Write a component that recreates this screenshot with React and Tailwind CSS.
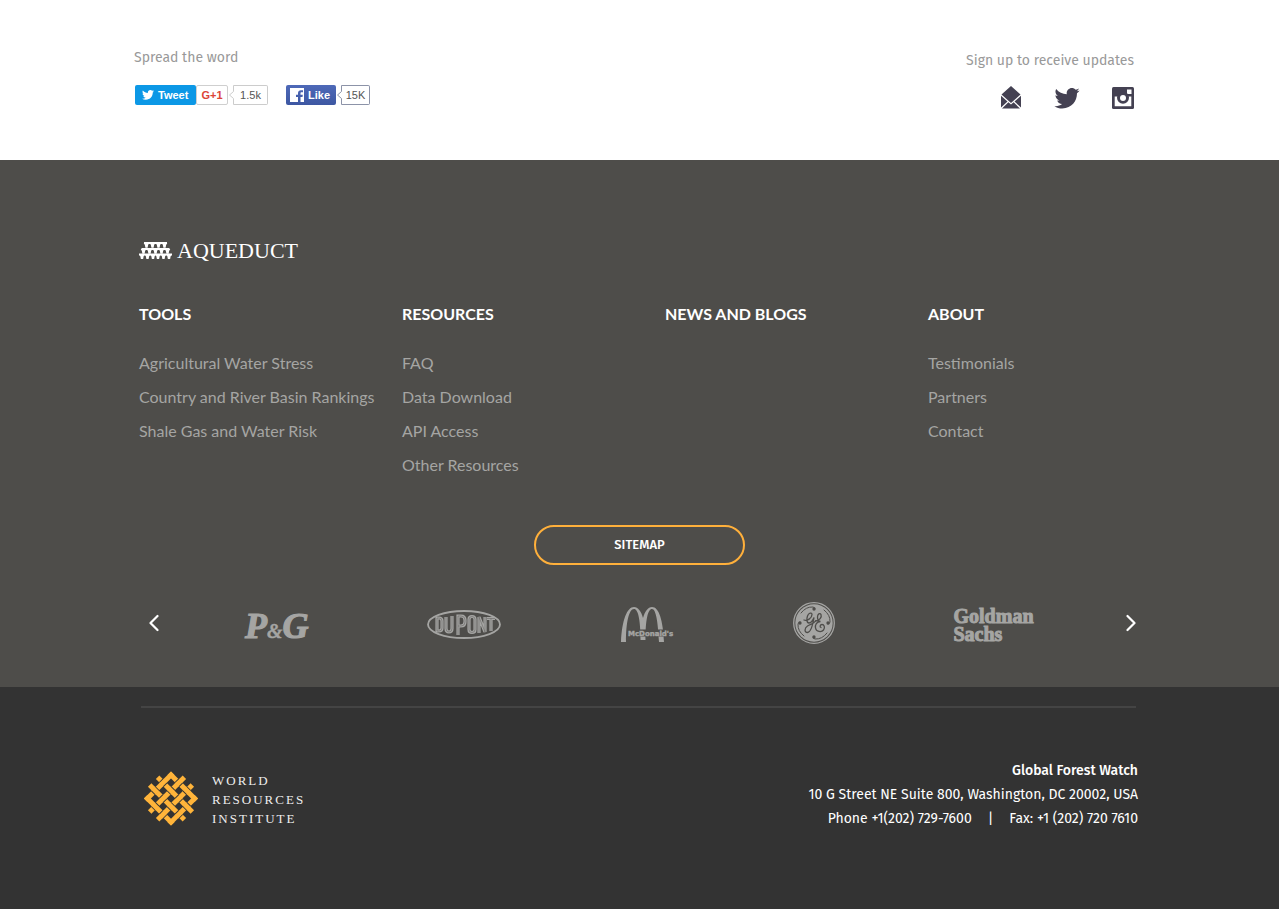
const columns = [
  { title: "TOOLS", links: ["Agricultural Water Stress", "Country and River Basin Rankings", "Shale Gas and Water Risk"] },
  { title: "RESOURCES", links: ["FAQ", "Data Download", "API Access", "Other Resources"] },
  { title: "NEWS AND BLOGS", links: [] },
  { title: "ABOUT", links: ["Testimonials", "Partners", "Contact"] },
];

function Bird({ className }) {
  return (
    <svg viewBox="0 0 24 20" className={className} fill="currentColor" aria-hidden="true">
      <path d="M24 2.4c-.9.4-1.8.7-2.8.8 1-.6 1.800-1.600 2.200-2.700-1 .6-2 1-3.100 1.200C19.400.6 18 0 16.600 0c-2.700 0-4.900 2.200-4.900 4.900 0 .4 0 .8.1 1.100C7.700 5.800 4.100 3.900 1.700.9c-.4.7-.7 1.600-.7 2.500 0 1.700.9 3.200 2.200 4.100-.8 0-1.600-.2-2.200-.6v.1c0 2.400 1.700 4.400 3.900 4.800-.4.1-.8.2-1.300.2-.3 0-.6 0-.9-.1.6 2 2.400 3.400 4.600 3.400-1.700 1.300-3.800 2.100-6.100 2.100-.4 0-.8 0-1.200-.1C2.200 18.700 4.800 19.500 7.500 19.500c9.100 0 14-7.500 14-14v-.6c1-.7 1.800-1.600 2.500-2.500z" />
    </svg>
  );
}

function Count({ value, width, stroke }) {
  return (
    <span className={`flex h-5 ${width} items-stretch text-[#555]`}>
      <svg viewBox="0 0 6 20" className="h-5 w-[6px] shrink-0" fill="none" stroke={stroke} aria-hidden="true">
        <path d="M6 .5H5.500V6.500L1.500 10l4 3.500V19.500H6" />
      </svg>
      <span className="flex grow items-center justify-center rounded-r-[2px] border border-l-0" style={{ borderColor: stroke }}>
        {value}
      </span>
    </span>
  );
}

function SocialButtons() {
  return (
    <div className="flex items-center font-['Liberation_Sans',sans-serif] text-[11px] leading-none">
      <button className="flex h-5 w-[61px] items-center gap-1 rounded-[2px] bg-[#0c98e6] pl-[7px] font-bold text-white">
        <Bird className="h-[10px] w-3 shrink-0" />
        Tweet
      </button>
      <button className="h-5 w-8 rounded-[2px] border border-[#cfcfcf] bg-white font-bold text-[#dc4437]">G+1</button>
      <Count value="1.5k" width="w-10" stroke="#cccccc" />
      <button className="ml-[18px] flex h-5 w-[50px] items-center gap-1 rounded-[2px] bg-linear-to-b from-[#4e69b8] to-[#3d57a2] pl-1 font-bold text-white">
        <svg viewBox="0 0 14 14" className="size-[14px] shrink-0" aria-hidden="true">
          <path fill="#fff" d="M0 0h14v14h-3.500V9h2l.3-2.200h-2.300V5.400c0-.7.2-1.100 1.100-1.100H13V2.300h-2C9.100 2.300 8 3.400 8 5.200v1.600H6V9h2v5H0z" />
        </svg>
        Like
      </button>
      <Count value="15K" width="w-[34px]" stroke="#8c93a8" />
    </div>
  );
}

const tiers = [
  { y: 0, x: 5, w: 23, piers: [7.5, 13.500, 19.500, 25.500] },
  { y: 6, x: 2.5, w: 28, piers: [4.5, 10.500, 16.500, 22.500, 28.500] },
  { y: 11.500, x: 0, w: 33, piers: [3, 8.500, 14, 19, 24.500, 30] },
];

function AqueductMark() {
  return (
    <svg viewBox="0 0 33 17" className="h-[17px] w-[33px]" fill="#fff" aria-hidden="true">
      {tiers.map(({ y, x, w, piers }) => (
        <g key={y}>
          <rect x={x} y={y} width={w} height="2" />
          {piers.map((p) => (
            <path key={p} d={`M${p - 2.8} ${y + 1}h5.600q-1.500 1.500-1.700 4.800h-2.200q-.2-3.300-1.700-4.800z`} />
          ))}
        </g>
      ))}
    </svg>
  );
}

const lanes = [-17, -5.7, 5.7, 17];

function WeaveMark() {
  const crossings = lanes.flatMap((x, i) => lanes.map((y, j) => ({ x, y, i, j }))).filter(
    ({ i, j }) => !((i === 0 || i === 3) && (j === 0 || j === 3)),
  );
  return (
    <svg viewBox="-28.500 -28 57 57" className="size-14" fill="#ffb43a" aria-hidden="true">
      <g transform="rotate(45)">
        {lanes.map((p, i) => {
          const reach = i === 0 || i === 3 ? 19.5 : 25;
          return (
            <g key={p}>
              <rect x={-reach} y={p - 2.5} width={reach * 2} height="5" />
              <rect y={-reach} x={p - 2.5} height={reach * 2} width="5" />
            </g>
          );
        })}
        {crossings.map(({ x, y, i, j }) => (
          <g key={`${i}-${j}`} transform={`translate(${x} ${y}) rotate(${(i + j) % 2 ? 90 : 0})`}>
            <rect x="-2.700" y="-3.400" width="5.400" height="6.800" fill="#333333" />
            <rect x="-3.400" y="-2.500" width="6.800" height="5" />
          </g>
        ))}
      </g>
    </svg>
  );
}

function PG() {
  return (
    <svg viewBox="0 0 64 42" className="h-[42px] w-16 overflow-visible" fill="#a5a5a3" stroke="#a5a5a3" strokeWidth="1.200" role="img" aria-label="P&G">
      <text x="1" y="36" fontSize="36" fontFamily="Liberation Serif, serif" fontWeight="700" fontStyle="italic">
        P<tspan fontSize="20" strokeWidth=".4">&amp;</tspan>G
      </text>
    </svg>
  );
}

function DuPont() {
  const letters =
    "M10 9v13h2q3 0 3-3v-7q0-3-3-3z M19 8v11.500q0 3.500 3 3.500t3-3.500V7 M31 26V7h3q4 0 4 4v2q0 4-4 4h-3 M42 10.500v10q0 3 3 3t3-3v-10q0-3-3-3t-3 3z M52 24V8l6 15V8 M60 9.500h8 M64 9.500V22";
  return (
    <svg viewBox="0 0 74 34" className="h-[34px] w-[74px]" fill="none" role="img" aria-label="DuPont">
      <g transform="translate(0 3)">
        <ellipse cx="37" cy="15.500" rx="36" ry="13.500" stroke="#a5a5a3" strokeWidth="1.800" />
        <path d={letters} stroke="#a5a5a3" strokeWidth="3.200" />
        <path d={letters} stroke="#4e4d4a" strokeWidth=".4" />
      </g>
    </svg>
  );
}

function McDonalds() {
  return (
    <svg viewBox="0 0 54 40" className="h-10 w-[54px] overflow-visible" fill="#a5a5a3" role="img" aria-label="McDonald's">
      <g transform="translate(1 4)">
        <path d="M0 35C1 13 6 0 13 0c4 0 7 4 9 11C24 4 27 0 31 0c7 0 11 13 12 35h-5C37 15 35 2 31 2c-4 0-6.500 10-6.500 31h-5C19.500 12 17 2 13 2 8 2 5 15 5 35z" />
        <rect x="6" y="22.500" width="48" height="7" fill="#4e4d4a" />
        <text x="7" y="28.500" fontSize="7" fontWeight="700" stroke="#a5a5a3" strokeWidth=".4" fontFamily="DejaVu Sans, sans-serif">McDonald's</text>
      </g>
    </svg>
  );
}

function GE() {
  return (
    <svg viewBox="0 0 42 42" className="size-[42px]" fill="none" role="img" aria-label="GE">
      <circle cx="21" cy="21" r="20.300" stroke="#a5a5a3" strokeWidth="1.300" />
      <circle cx="21" cy="21" r="18.700" fill="#a5a5a3" />
      <g stroke="#4e4d4a" strokeWidth="1.300" strokeLinecap="round">
        {[0, 90, 180, 270].map((r) => (
          <g key={r} transform={`rotate(${r} 21 21)`}>
            <path d="M8 11Q13 4.500 20 5q2.500 .5 2 2" strokeWidth="1" />
            <circle cx="21" cy="7" r="1" fill="#4e4d4a" />
          </g>
        ))}
        <path d="M11 18c3 1.500 8-2 8-5.500 0-2.500-3.500-1.500-4.500 1.500s-1 7 1.500 7 4-3 5-5.500c-1 6-2.500 15-6.500 15-3.500 0-3-4.500 0-6.500s6-2 8-5" />
        <path d="M22.500 19c4 0 6.500-4 5.500-6.500-1-2-3.500-.5-3.500 2.500s1 4.500 3 4.500c-4 0-5.500 3.500-5 6.500.7 4 6 4.500 8 2s.5-5.500-1.500-5.500-2.500 2.500-1 3" />
      </g>
    </svg>
  );
}

function GoldmanSachs() {
  return (
    <span className="block w-[82px] pt-1 font-['Liberation_Serif',serif] text-xl leading-[18px] font-bold text-[#a5a5a3] [-webkit-text-stroke:1px_#a5a5a3]">
      Goldman
      <br />
      Sachs
    </span>
  );
}

function Arrow({ label, d }) {
  return (
    <button aria-label={label} className="shrink-0">
      <svg viewBox="0 0 10 18" className="h-[18px] w-[10px]" fill="none" stroke="#fff" strokeWidth="2.200" strokeLinecap="round" strokeLinejoin="round">
        <path d={d} />
      </svg>
    </button>
  );
}

export default function App() {
  return (
    <div className="min-h-screen bg-[#333333] font-['Lato',sans-serif]">
      <section className="bg-white px-6 font-['Fira_Sans','Noto_Sans',sans-serif] text-sm leading-5 text-[#999]">
        <div className="mx-auto flex h-40 max-w-[1011px] justify-between pt-12 pr-[11px]">
          <div>
            <p>Spread the word</p>
            <div className="mt-[17px] ml-px">
              <SocialButtons />
            </div>
          </div>
          <div className="pt-[3px]">
            <p>Sign up to receive updates</p>
            <div className="mt-[15px] flex items-center justify-end gap-8 text-[#444152]">
              <a href="#email" aria-label="Email">
                <svg viewBox="0 0 22 24" className="h-6 w-[22px]" fill="currentColor">
                  <path d="M11 0l9.500 8.500L11 17 1.500 8.500z M1 9.800l6.500 5.700L1 21.500z M21 9.800v11.700l-6.500-6z M8.400 16.300L11 18.500l2.600-2.200L20 22.500H2z" />
                </svg>
              </a>
              <a href="#twitter" aria-label="Twitter">
                <Bird className="h-[21px] w-[26px]" />
              </a>
              <a href="#instagram" aria-label="Instagram">
                <svg viewBox="0 0 22 22" className="size-[22px]" fill="currentColor">
                  <rect width="22" height="22" rx="1.500" />
                  <path fill="#fff" d="M15 2.500h4.500V7H15z M2.700 9.500h16.600v9.800H2.700z" />
                  <circle cx="11" cy="10.700" r="6" />
                  <circle cx="11" cy="11" r="3" fill="#fff" />
                </svg>
              </a>
            </div>
          </div>
        </div>
      </section>

      <section className="bg-[#4e4d4a] px-6">
        <div className="mx-auto max-w-[1001px] pt-[76px] pb-[43px]">
          <a href="#home" className="flex h-7 items-center gap-[5px] font-['Liberation_Serif',serif] text-[22px] text-white">
            <AqueductMark />
            AQUEDUCT
          </a>
          <div className="mt-10 grid min-h-[174px] grid-cols-4 gap-x-[51px]">
            {columns.map((column) => (
              <nav key={column.title} className="whitespace-nowrap">
                <h2 className="text-base leading-5 font-bold text-white">{column.title}</h2>
                <ul className="mt-[22px] text-base leading-[34px] text-[#a5a5a3]">
                  {column.links.map((link) => (
                    <li key={link}>
                      <a href="#page">{link}</a>
                    </li>
                  ))}
                </ul>
              </nav>
            ))}
          </div>
          <div className="mt-[43px] flex justify-center">
            <button className="h-10 w-[211px] rounded-full border-2 border-[#ffb03b] font-['Fira_Sans','Noto_Sans',sans-serif] text-[13px] font-medium text-white">
              SITEMAP
            </button>
          </div>
          <div className="mt-[37px] flex items-center justify-between pr-1 pl-[10px]">
            <Arrow label="Previous" d="M8.500 2L1.500 9l7 7" />
            <div className="mr-[6px] flex items-center gap-[119px]">
              <PG />
              <DuPont />
              <McDonalds />
              <GE />
              <GoldmanSachs />
            </div>
            <Arrow label="Next" d="M1.500 2l7 7-7 7" />
          </div>
        </div>
      </section>

      <footer className="px-6 pt-[19px] font-['Fira_Sans','Noto_Sans',sans-serif]">
        <div className="mx-auto max-w-[1001px]">
          <hr className="mr-1 ml-[2px] border-t-2 border-[#444444]" />
          <div className="flex justify-between pt-[51px]">
            <a href="#wri" className="mt-3 ml-1 flex items-start gap-[13px] text-[#eeeeee]">
              <WeaveMark />
              <span className="font-['Liberation_Serif',serif] text-[13px] leading-[19px] tracking-[2px]">
                WORLD
                <br />
                RESOURCES
                <br />
                INSTITUTE
              </span>
            </a>
            <address className="pr-[2px] text-right text-sm leading-6 text-white not-italic">
              <strong className="font-medium">Global Forest Watch</strong>
              <p>10 G Street NE Suite 800, Washington, DC 20002, USA</p>
              <p className="flex justify-end gap-4">
                <span>Phone +1(202) 729-7600</span>
                <span>|</span>
                <span>Fax: +1 (202) 720 7610</span>
              </p>
            </address>
          </div>
        </div>
      </footer>
    </div>
  );
}
